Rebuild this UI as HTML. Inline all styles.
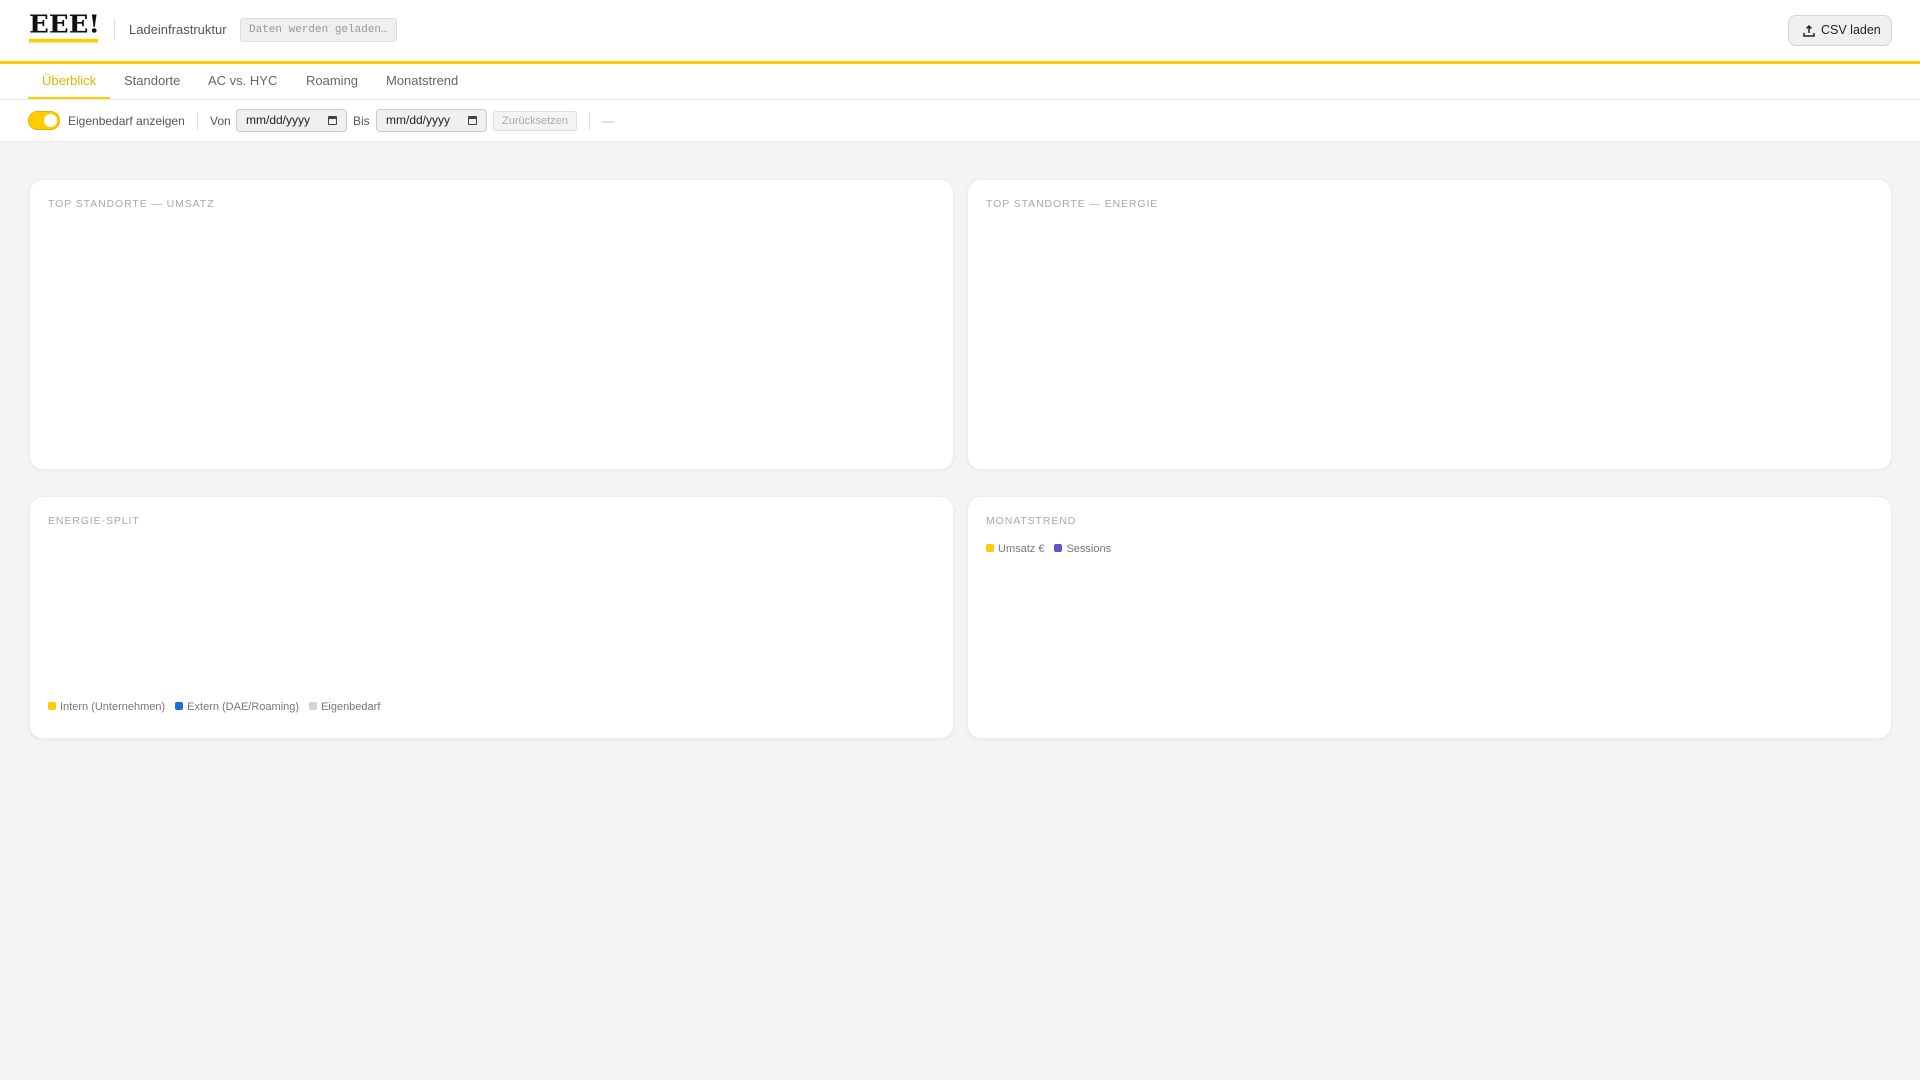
<!DOCTYPE html>
<html><head><meta charset="utf-8"><style>
*{box-sizing:border-box;margin:0;padding:0}
body{width:1920px;height:1080px;background:#f4f4f2;font-family:"Liberation Sans",sans-serif;position:relative;overflow:hidden}
.hdr{position:absolute;left:0;top:0;width:1920px;height:64px;background:#fff;border-bottom:3px solid #ffcc00}
.logo{position:absolute;left:29px;top:14px;font-family:"DejaVu Serif",serif;font-weight:bold;font-size:26px;color:#111;letter-spacing:0;line-height:24px;transform:scaleY(0.92);transform-origin:top left}
.logo:after{content:"";position:absolute;left:0;right:2px;top:27px;height:4px;background:#ffcc00}
.vd{position:absolute;width:1px;background:#ddd}
.sub{position:absolute;left:129px;top:22px;font-size:13px;color:#555}
.badge{position:absolute;left:240px;top:18px;width:157px;height:24px;background:#efefef;border:1px solid #ddd;border-radius:3px;font-family:"Liberation Mono",monospace;font-size:11px;color:#999;line-height:22px;padding-left:8px}
.csv{position:absolute;left:1788px;top:15px;width:104px;height:31px;background:#efefed;border:1px solid #d6d6d6;border-radius:8px;font-size:12.5px;color:#222;line-height:29px;padding-left:32px}
.csv svg{position:absolute;left:13px;top:8px}
.tabs{position:absolute;left:0;top:64px;width:1920px;height:36px;background:#fff;border-bottom:1px solid #e8e8e8}
.tab{position:absolute;top:9px;font-size:13px;color:#666}
.act{color:#e0b400}
.ul{position:absolute;left:28px;top:33px;width:82px;height:2px;background:#ffcc00}
.flt{position:absolute;left:0;top:100px;width:1920px;height:42px;background:#fff;border-bottom:1px solid #e8e8e8;font-size:12px;color:#555}
.flt span{position:absolute;top:14px}
.tog{position:absolute;left:28px;top:11px;width:32px;height:19px;border-radius:10px;background:#ffcc00;border:1px solid #e0b400}
.tog:after{content:"";position:absolute;right:2px;top:2px;width:13px;height:13px;border-radius:50%;background:#fff}
.date{position:absolute;top:9px;width:111px;height:23px;background:#f0f0f0;border:1px solid #ccc;border-radius:4px;font-size:12px;color:#222;line-height:21px;padding-left:9px}
.date i{position:absolute;right:9px;top:6px;width:9px;height:9px;border:1.5px solid #444;border-top-width:3px;border-radius:1px}
.rst{position:absolute;left:493px;top:11px;width:84px;height:20px;border:1px solid #ddd;background:#f4f4f4;border-radius:3px;font-size:11px;color:#aaa;text-align:center;line-height:18px}
.card{position:absolute;background:#fff;border-radius:14px;box-shadow:0 1px 3px rgba(0,0,0,.06);border:1px solid #eee}
.ct{position:absolute;left:18px;top:18px;font-size:10.5px;letter-spacing:0.9px;color:#a8a8a8}
.lg{position:absolute;left:18px;font-size:11px;color:#777;white-space:nowrap}
.lg b{display:inline-block;width:8px;height:8px;border-radius:2px;margin-right:4px;vertical-align:0px}
.lg em{font-style:normal;margin-right:10px}
</style></head><body>
<div class="hdr">
<div class="logo">EEE!</div>
<div class="vd" style="left:114px;top:19px;height:22px"></div>
<div class="sub">Ladeinfrastruktur</div>
<div class="badge">Daten werden geladen…</div>
<div class="csv"><svg width="14" height="14" viewBox="0 0 14 14" fill="none" stroke="#222" stroke-width="1.5"><path d="M7 9V2M4.5 4.5L7 2l2.5 2.5M2 9v3h10V9"/></svg>CSV laden</div>
</div>
<div class="tabs">
<div class="tab act" style="left:42px">Überblick</div>
<div class="tab" style="left:124px">Standorte</div>
<div class="tab" style="left:208px">AC vs. HYC</div>
<div class="tab" style="left:306px">Roaming</div>
<div class="tab" style="left:386px">Monatstrend</div>
<div class="ul"></div>
</div>
<div class="flt">
<div class="tog"></div>
<span style="left:68px">Eigenbedarf anzeigen</span>
<div class="vd" style="left:197px;top:12px;height:18px"></div>
<span style="left:210px">Von</span>
<div class="date" style="left:236px">mm/dd/yyyy<i></i></div>
<span style="left:353px">Bis</span>
<div class="date" style="left:376px">mm/dd/yyyy<i></i></div>
<div class="rst">Zurücksetzen</div>
<div class="vd" style="left:589px;top:12px;height:18px"></div>
<span style="left:602px;color:#bbb">—</span>
</div>
<div class="card" style="left:29px;top:179px;width:925px;height:291px"><div class="ct">TOP STANDORTE — UMSATZ</div></div>
<div class="card" style="left:967px;top:179px;width:925px;height:291px"><div class="ct">TOP STANDORTE — ENERGIE</div></div>
<div class="card" style="left:29px;top:496px;width:925px;height:243px"><div class="ct">ENERGIE-SPLIT</div>
<div class="lg" style="top:204px"><b style="background:#ffcc00"></b><em>Intern (Unternehmen)</em><b style="background:#1a6fdf"></b><em>Extern (DAE/Roaming)</em><b style="background:#d4d4d0"></b><em>Eigenbedarf</em></div></div>
<div class="card" style="left:967px;top:496px;width:925px;height:243px"><div class="ct">MONATSTREND</div>
<div class="lg" style="top:46px"><b style="background:#ffcc00"></b><em>Umsatz €</em><b style="background:#6a4fc8"></b><em>Sessions</em></div></div>
</body></html>
